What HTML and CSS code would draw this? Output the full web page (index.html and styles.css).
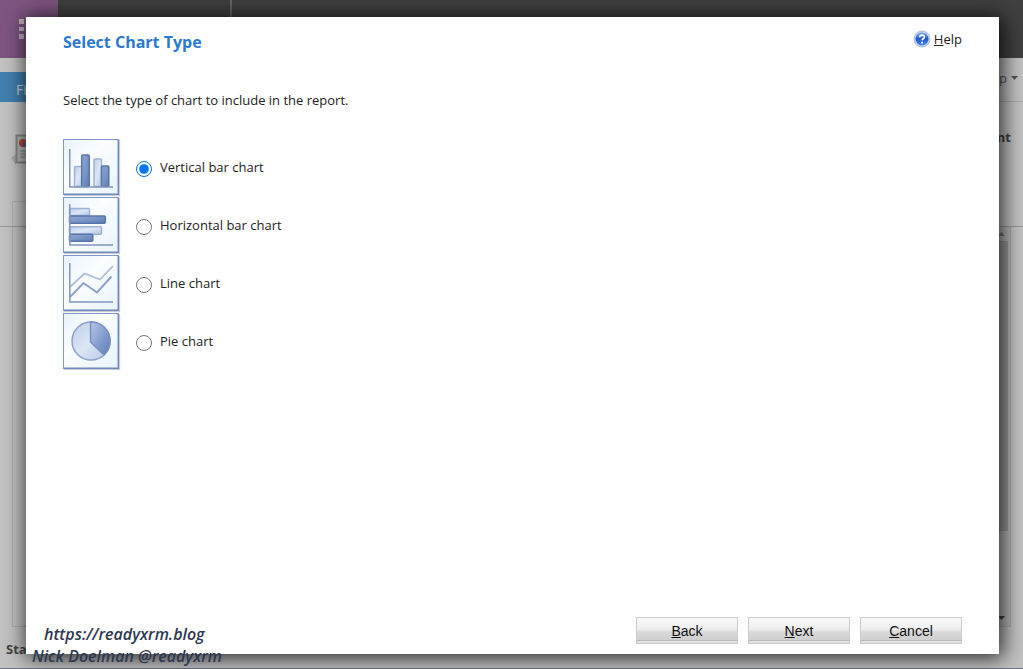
FILE: index.html
```
<!DOCTYPE html>
<html lang="en">
  <head>
    <meta charset="UTF-8" />
    <meta name="viewport" content="width=device-width, initial-scale=1.0" />
    <title>Select Chart Type</title>
    <link rel="stylesheet" href="styles.css" />
  </head>
  <body>
    <!-- Page behind the dialog -->
    <div class="page">
      <header class="topbar">
        <div class="launcher">
          <svg width="16" height="20" viewBox="0 0 16 20" fill="#c3b5c1">
            <path d="M0 0h5v5H0zM7 0h5v5H7zM0 8h5v4H0zM7 8h5v4H7zM0 15h5v5H0zM7 15h5v5H7z" />
          </svg>
        </div>
        <div class="brand"></div>
      </header>

      <div class="ribbon">
        <button type="button" class="file-tab">File</button>
        <a href="#" class="ribbon-help">Help
          <svg width="7" height="4" viewBox="0 0 7 4"><path d="M0 0h7L3.500 4z" fill="#555" /></svg>
        </a>
      </div>

      <div class="record">
        <svg width="28" height="34" viewBox="0 0 28 34">
          <path d="M0 24l5-4v11z" fill="#a5a5a5" />
          <path d="M5.500 1.500h22v27h-22z" fill="#b8b8b8" stroke="#858585" stroke-width="2" />
          <circle cx="12" cy="9" r="4" fill="#b54a3c" />
          <path d="M12 9h4a4 4 0 0 1-4 4z" fill="#49618f" />
          <path d="M9 17h10M9 20h10M9 23h10" stroke="#7c8594" />
        </svg>
        <strong>Environment</strong>
      </div>

      <div class="tabs"><div class="tab"></div></div>

      <div class="frame">
        <div class="scrollbar">
          <svg width="7" height="4" viewBox="0 0 7 4"><path d="M0 4h7L3.500 0z" fill="#777" /></svg>
          <div class="thumb"></div>
          <svg width="7" height="4" viewBox="0 0 7 4"><path d="M0 0h7L3.500 4z" fill="#444" /></svg>
        </div>
      </div>

      <footer class="status"><div class="status-text">Status</div></footer>
    </div>

    <!-- Wizard dialog -->
    <form class="dialog">
      <div class="dialog-header">
        <h1>Select Chart Type</h1>
        <a href="#" class="help">
          <svg width="18" height="18" viewBox="0 0 18 18">
            <defs>
              <linearGradient id="ball" x1="0" y1="0" x2="0" y2="1">
                <stop offset="0" stop-color="#7ba7ee" />
                <stop offset="0.5" stop-color="#1d56cf" />
                <stop offset="1" stop-color="#3f8df5" />
              </linearGradient>
            </defs>
            <circle cx="9" cy="9" r="8" fill="#c9d7ef" stroke="#a9bbdc" />
            <circle cx="9" cy="9" r="6.500" fill="url(#ball)" />
            <path d="M6.700 7.200C6.700 4.300 11.400 4.400 11.400 7C11.400 8.700 9.200 8.700 9.100 10.300" fill="none" stroke="#fff" stroke-width="1.800" />
            <circle cx="9.100" cy="12.700" r="1.100" fill="#fff" />
          </svg>
          <span><u>H</u>elp</span>
        </a>
      </div>

      <p class="intro">Select the type of chart to include in the report.</p>

      <svg class="defs" width="0" height="0">
        <defs>
          <linearGradient id="tile" x1="0" y1="0" x2="1" y2="1">
            <stop offset="0" stop-color="#e8f3fe" />
            <stop offset="0.4" stop-color="#fbfdff" />
            <stop offset="1" stop-color="#e8f4ff" />
          </linearGradient>
          <linearGradient id="light" x1="0" y1="0" x2="1" y2="1">
            <stop offset="0" stop-color="#bccde8" />
            <stop offset="0.5" stop-color="#dce7f6" />
            <stop offset="1" stop-color="#b3c6e4" />
          </linearGradient>
          <linearGradient id="dark" x1="0" y1="0" x2="1" y2="1">
            <stop offset="0" stop-color="#8fa8d2" />
            <stop offset="0.5" stop-color="#7b95c6" />
            <stop offset="1" stop-color="#5d7ab2" />
          </linearGradient>
          <linearGradient id="slice" x1="0" y1="0" x2="1" y2="1">
            <stop offset="0" stop-color="#b5c7e6" />
            <stop offset="1" stop-color="#5c7ab8" />
          </linearGradient>
        </defs>
      </svg>

      <div class="options">
        <label class="option">
          <svg class="tile" width="56" height="56" viewBox="0 0 56 56">
            <rect x="0.500" y="0.500" width="55" height="55" fill="url(#tile)" stroke="#8297c4" />
            <path d="M55.300 1v54.300H1" fill="none" stroke="#7188ba" stroke-width="1.500" />
            <g stroke="#9fb3d8" stroke-width="1.500">
              <rect x="11.500" y="27.500" width="8" height="20" rx="1" fill="url(#light)" />
              <rect x="31" y="20" width="7.500" height="27.500" rx="1" fill="url(#light)" />
            </g>
            <g stroke="#5975ae" stroke-width="1.500">
              <rect x="18.700" y="16" width="7.600" height="31.500" rx="1" fill="url(#dark)" />
              <rect x="38.500" y="27" width="7.300" height="20.500" rx="1" fill="url(#dark)" />
            </g>
            <path d="M6.800 10v38H50" fill="none" stroke="#8195be" stroke-width="1.500" />
          </svg>
          <input type="radio" name="chart" checked />
          <span>Vertical bar chart</span>
        </label>

        <label class="option">
          <svg class="tile" width="56" height="56" viewBox="0 0 56 56">
            <rect x="0.500" y="0.500" width="55" height="55" fill="url(#tile)" stroke="#8297c4" />
            <path d="M55.300 1v54.300H1" fill="none" stroke="#7188ba" stroke-width="1.500" />
            <g stroke="#9fb3d8" stroke-width="1.500">
              <rect x="6.500" y="11.500" width="20" height="7" rx="1" fill="url(#light)" />
              <rect x="6.500" y="29.700" width="32" height="7.500" rx="1" fill="url(#light)" />
            </g>
            <g stroke="#5975ae" stroke-width="1.500">
              <rect x="6.500" y="19" width="35.800" height="7.200" rx="1" fill="url(#dark)" />
              <rect x="6.500" y="37.200" width="23.300" height="7" rx="1" fill="url(#dark)" />
            </g>
            <path d="M6.800 7v41H50" fill="none" stroke="#8195be" stroke-width="1.500" />
          </svg>
          <input type="radio" name="chart" />
          <span>Horizontal bar chart</span>
        </label>

        <label class="option">
          <svg class="tile" width="56" height="56" viewBox="0 0 56 56">
            <rect x="0.500" y="0.500" width="55" height="55" fill="url(#tile)" stroke="#8297c4" />
            <path d="M55.300 1v54.300H1" fill="none" stroke="#7188ba" stroke-width="1.500" />
            <path d="M7 32L21.500 18.500L37 24.500L50 11" fill="none" stroke="#acbddb" stroke-width="1.800" />
            <path d="M7 42L20.500 28L34 37.500L48.500 21.500" fill="none" stroke="#8ca2cd" stroke-width="2" />
            <path d="M6.800 8v39H50" fill="none" stroke="#8195be" stroke-width="1.500" />
          </svg>
          <input type="radio" name="chart" />
          <span>Line chart</span>
        </label>

        <label class="option">
          <svg class="tile" width="56" height="56" viewBox="0 0 56 56">
            <rect x="0.500" y="0.500" width="55" height="55" fill="url(#tile)" stroke="#8297c4" />
            <path d="M55.300 1v54.300H1" fill="none" stroke="#7188ba" stroke-width="1.500" />
            <circle cx="28" cy="28" r="19" fill="url(#light)" stroke="#8ca2cd" stroke-width="1.500" />
            <path d="M27.500 9A19 19 0 0 1 41 42L27.500 29z" fill="url(#slice)" stroke="#7791c4" stroke-width="1.500" />
          </svg>
          <input type="radio" name="chart" />
          <span>Pie chart</span>
        </label>
      </div>

      <div class="actions">
        <button type="button"><u>B</u>ack</button>
        <button type="button"><u>N</u>ext</button>
        <button type="button"><u>C</u>ancel</button>
      </div>
    </form>

    <div class="watermark">
      <div class="site">https://readyxrm.blog</div>
      <div>Nick Doelman @readyxrm</div>
    </div>
  </body>
</html>
```
FILE: styles.css
```
* {
  margin: 0;
  padding: 0;
  box-sizing: border-box;
}

body {
  position: relative;
  height: 100vh;
  overflow: hidden;
  font-family: 'Segoe UI', 'Open Sans', sans-serif;
  font-size: 13px;
  color: #222;
}

a {
  color: inherit;
  text-decoration: none;
}

svg {
  flex: none;
}

/* Page behind the dialog */
.page {
  display: flex;
  flex-direction: column;
  height: 100%;
  background-color: #c2c2c2;
  border-bottom: 1px solid #6f778c;
}

.topbar {
  display: flex;
  height: 58px;
  background-color: #404040;
}

.launcher {
  width: 58px;
  padding: 19px;
  background-color: #7e5580;
}

.brand {
  width: 174px;
  border-right: 2px solid #666;
}

.ribbon {
  display: flex;
  justify-content: space-between;
  align-items: flex-end;
  height: 44px;
}

.file-tab {
  width: 58px;
  height: 30px;
  padding: 4px 16px 0;
  border: none;
  background-color: #417fb0;
  color: #c8d4de;
  font-family: inherit;
  font-size: 14px;
  text-align: left;
}

.ribbon-help {
  display: flex;
  flex: 1;
  align-items: center;
  justify-content: flex-end;
  gap: 4px;
  height: 100%;
  padding: 0 5px 4px 0;
  border-bottom: 1px solid #aaa;
  color: #555;
}

.record {
  display: flex;
  justify-content: space-between;
  align-items: flex-start;
  height: 99px;
  padding: 32px 12px 0 11px;
  line-height: 6px;
  color: #444;
}

.tabs {
  height: 26px;
  padding-left: 12px;
  border-bottom: 1px solid #999;
}

.tab {
  width: 100px;
  height: 100%;
  border: 1px solid #b0b0b0;
  border-bottom: none;
}

.frame {
  display: flex;
  flex: 1;
  justify-content: flex-end;
  margin: 0 12px;
  border: 1px solid #acacac;
  border-top: none;
}

.scrollbar {
  display: flex;
  flex-direction: column;
  align-items: center;
  gap: 5px;
  width: 16px;
  padding: 5px 2px 6px 0;
  background-color: #b9b9b9;
}

.thumb {
  flex: 1;
  width: 14px;
  margin-bottom: 80px;
  background-color: #9c9c9c;
}

.status {
  height: 41px;
  padding: 13px 6px;
  line-height: 18px;
  font-weight: bold;
  color: #444;
}

.status-text {
  width: 22px;
  overflow: hidden;
}

/* Wizard dialog */
.dialog {
  position: absolute;
  top: 17px;
  right: 24px;
  bottom: 15px;
  left: 26px;
  display: flex;
  flex-direction: column;
  padding: 13px 37px 10px;
  background-color: #fff;
  box-shadow: 2px 2px 20px 2px rgba(0, 0, 0, 0.8);
}

.dialog-header {
  display: flex;
  justify-content: space-between;
  align-items: flex-start;
}

h1 {
  font-size: 16px;
  line-height: 24px;
  color: #2b79d0;
}

.help {
  display: flex;
  gap: 3px;
  line-height: 18px;
}

.intro {
  margin-top: 37px;
  line-height: 18px;
}

.defs {
  position: absolute;
}

.options {
  display: flex;
  flex-direction: column;
  align-items: flex-start;
  gap: 2px;
  margin-top: 30px;
}

.option {
  display: flex;
  align-items: center;
}

.tile {
  box-shadow: 1px 1px 1px #c8cdd8;
}

.option input {
  width: 16px;
  height: 16px;
  margin: 4px 8px 0 17px;
  accent-color: #0075ff;
}

.actions {
  display: flex;
  justify-content: flex-end;
  gap: 10px;
  margin-top: auto;
}

.actions button {
  width: 102px;
  height: 27px;
  border: 1px solid #c8ccd0;
  background: linear-gradient(#fafafa, #ededed 45%, #dadada 55%, #cfcfcf 88%, #b8b8b8 90%, #e2e2e2 94%);
  font-family: 'Liberation Sans', Arial, sans-serif;
  font-size: 14px;
  color: #111;
}

/* Watermark over the dialog edge */
.watermark {
  position: absolute;
  bottom: 2px;
  left: 32px;
  font-family: 'Comic Sans MS', 'Open Sans', cursive;
  font-size: 16px;
  font-style: italic;
  font-weight: 600;
  line-height: 22px;
  color: #2c3850;
}

.site {
  padding-left: 12px;
}
```
